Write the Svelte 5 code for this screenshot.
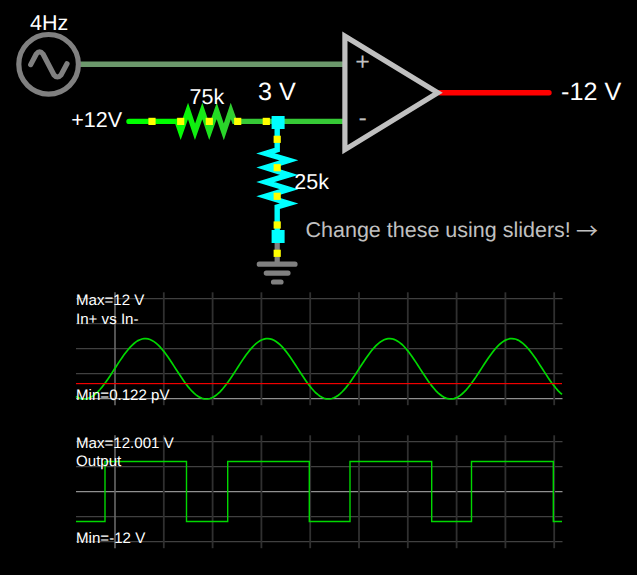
<script>
  const columns = Array.from({ length: 10 }, (_, i) => 39 + i * 48.8);
  const rows = [6.6, 31.6, 56.6, 81.6, 106.6];

  const sine = Array.from({ length: 244 }, (_, i) => {
    const x = Math.min(i * 2, 486);
    const y = 76.8 - 30.2 * Math.cos(((x - 69.2) / 122.2) * 2 * Math.PI);
    return `${x},${y.toFixed(1)}`;
  }).join(' ');

  const edges = [29, 110.5, 151.7, 233.3, 274, 355.7, 395.5, 477.3];
  let square = 'M0 86.5';
  edges.forEach((x, i) => {
    square += `H${x}V${i % 2 === 0 ? 26.5 : 86.5}`;
  });
  square += 'H486';

  const scopes = [
    { max: 'Max=12 V', name: 'In+ vs In-', nameY: 32, min: 'Min=0.122 pV', axis: 4 },
    { max: 'Max=12.001 V', name: 'Output', nameY: 31.4, min: 'Min=-12 V', axis: 2 },
  ];

  const dotsAcross = [152, 180.7, 209.3, 237.7, 266.3];
  const dotsDown = [139.3, 167.7, 196.3, 225, 253.3];
</script>

<main>
  <svg class="circuit" width="637" height="292" viewBox="0 0 637 292">
    <defs>
      <linearGradient id="drop" gradientUnits="userSpaceOnUse" x1="177" y1="0" x2="237" y2="0">
        <stop offset="0" stop-color="#00ff00" />
        <stop offset="1" stop-color="#36c936" />
      </linearGradient>
    </defs>

    <g class="wire">
      <path d="M80 64.2H345" stroke="#6b986b" />
      <path d="M129 121.4H177" stroke="#00ff00" stroke-linecap="round" />
      <path d="M236 121.4H345" stroke="#36c936" />
      <path d="M440 92.8H549" stroke="#ff0000" stroke-linecap="round" />
      <path
        d="M176 121.4H177.2L180.7 131.8L188 111L195 131.8L202.3 111L209.3 131.8L216.7 111L223.8 131.8L230.8 111L234.5 121.4H238"
        stroke="url(#drop)"
        stroke-miterlimit="10"
      />
      <path
        d="M277.2 122V149.8L265.5 153.4L289 160.4L265.5 167.6L289 174.9L265.5 182L289 189.2L265.5 196.3L289 203.5L277.2 207V236"
        stroke="#00ffff"
        stroke-miterlimit="10"
      />
    </g>

    <g class="part">
      <circle cx="48.6" cy="64.3" r="29.8" />
      <path d="M30.7 64.6L36.3 54Q39.6 49.6 43 54L54 75Q57.4 79 61 75L67 63.8" />
      <path d="M277.2 238V262M259.3 264.2H295M266.3 273.1H288M273.5 282H281" />
    </g>
    <path class="amp" d="M344.9 36.2V149.6L437.8 92.8Z" />

    <rect x="271.6" y="116" width="13" height="13" fill="#00ffff" />
    <rect x="271.6" y="230" width="13" height="13" fill="#00ffff" />
    {#each dotsAcross as x}
      <rect x={x - 3.6} y="117.8" width="7.2" height="7.2" fill="#ffff00" />
    {/each}
    {#each dotsDown as y}
      <rect x="273.6" y={y - 3.6} width="7.2" height="7.2" fill="#ffff00" />
    {/each}

    <g class="label">
      <text x="30" y="30">4Hz</text>
      <text x="71.3" y="127">+12V</text>
      <text x="189.5" y="104">75k</text>
      <text x="294.3" y="189">25k</text>
      <text class="volt" x="258" y="100">3 V</text>
      <text class="volt" x="561" y="100">-12 V</text>
    </g>
    <g class="label dim">
      <text class="sign" x="355.2" y="69.9">+</text>
      <text class="sign" x="358.6" y="126">-</text>
      <text x="305.5" y="237">Change these using sliders!</text>
      <text class="arrow" x="576" y="239">→</text>
    </g>
  </svg>

  {#each scopes as s, i}
    <svg class="scope" width="490" height="114" viewBox="0 0 490 114">
      <g class="grid">
        {#each rows as y, r}
          <path d={`M0 ${y}H486.5`} class:axis={r === s.axis} />
        {/each}
        {#each columns as x, c}
          <path d={`M${x} 0.3V113.2`} class={c === 0 ? 'origin' : 'col'} />
        {/each}
      </g>
      {#if i === 0}
        <polyline class="trace wave" points={sine} />
        <rect class="level" x="0" y="91" width="486" height="1.2" />
      {:else}
        <path class="trace" d={square} />
      {/if}
      <text x="0" y="12.7">{s.max}</text>
      <text x="0" y={s.nameY}>{s.name}</text>
      <text x="0" y="107.8">{s.min}</text>
    </svg>
  {/each}
</main>

<style>
  :global(body) {
    margin: 0;
    background: #000;
  }
  main {
    width: 637px;
    height: 575px;
    overflow: hidden;
    background: #000;
    display: flex;
    flex-direction: column;
  }
  svg {
    display: block;
    flex: none;
  }
  text {
    font-family: 'Liberation Sans', Arial, sans-serif;
    fill: #fff;
    text-rendering: geometricPrecision;
  }
  .circuit text {
    font-size: 21.5px;
  }
  .circuit .volt {
    font-size: 25.2px;
  }
  .circuit .dim text {
    fill: #c0c0c0;
  }
  .circuit .sign {
    font-size: 25px;
  }
  .circuit .arrow {
    font-family: 'Noto Sans CJK JP', sans-serif;
    font-size: 22px;
  }
  .wire path {
    fill: none;
    stroke-width: 5.4;
  }
  .part {
    fill: none;
    stroke: #808080;
    stroke-width: 5.2;
    stroke-linecap: round;
  }
  .amp {
    fill: none;
    stroke: #c0c0c0;
    stroke-width: 5.2;
    stroke-miterlimit: 10;
  }
  .scope {
    margin-left: 76px;
    overflow: visible;
  }
  .scope + .scope {
    margin-top: 29px;
  }
  .scope text {
    font-size: 15.1px;
  }
  .grid path {
    stroke: #404040;
    stroke-width: 1.4;
  }
  .grid .col {
    stroke: #303030;
    stroke-width: 1.8;
  }
  .grid .axis {
    stroke: #909090;
  }
  .grid .origin {
    stroke: #686868;
    stroke-width: 1.6;
  }
  .trace {
    fill: none;
    stroke: #00d800;
    stroke-width: 1.4;
  }
  .wave {
    stroke-width: 1.7;
  }
  .level {
    fill: #f00000;
  }
</style>
